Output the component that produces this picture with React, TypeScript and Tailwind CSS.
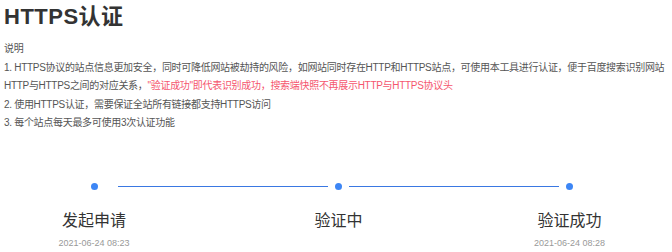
import React from "react";

const font = { fontFamily: '"Liberation Sans", "Noto Sans CJK SC", sans-serif' };

export default function App() {
  return (
    <div className="w-[672px] h-[252px] bg-white overflow-hidden" style={font}>
      <div className="pl-[4px] h-[34px] leading-[34px] text-[22px] font-bold text-[#333333] tracking-[0.5px]">HTTPS认证</div>
      <div className="mt-[6px] pl-[4px] text-[10px] leading-[18.5px] text-[#555555] whitespace-nowrap tracking-[-0.3px]">
        <div>说明</div>
        <div>1. HTTPS协议的站点信息更加安全，同时可降低网站被劫持的风险，如网站同时存在HTTP和HTTPS站点，可使用本工具进行认证，便于百度搜索识别网站</div>
        <div>
          HTTP与HTTPS之间的对应关系，
          <span className="text-[#f5566e]">"验证成功"即代表识别成功，搜索端快照不再展示HTTP与HTTPS协议头</span>
        </div>
        <div>2. 使用HTTPS认证，需要保证全站所有链接都支持HTTPS访问</div>
        <div>3. 每个站点每天最多可使用3次认证功能</div>
      </div>
      <div className="mt-[50px] flex items-center h-[7px]">
        <div className="ml-[91px] w-[7px] h-[7px] rounded-full bg-[#3d86f5]" />
        <div className="ml-[20px] w-[210px] h-px bg-[#3a78e2]" />
        <div className="ml-[7px] w-[7px] h-[7px] rounded-full bg-[#3d86f5]" />
        <div className="ml-[7px] w-[210px] h-px bg-[#3a78e2]" />
        <div className="ml-[7px] w-[7px] h-[7px] rounded-full bg-[#3d86f5]" />
      </div>
      <div className="mt-[21px] flex">
        <div className="ml-[34px] w-[120px] text-center">
          <div className="text-[16px] leading-[20px] text-[#333333]">发起申请</div>
          <div className="mt-[6px] text-[9px] leading-[12px] text-[#999999]">2021-06-24 08:23</div>
        </div>
        <div className="w-[369px] text-center">
          <div className="text-[16px] leading-[20px] text-[#333333]">验证中</div>
        </div>
        <div className="w-[93px] text-center">
          <div className="text-[16px] leading-[20px] text-[#333333]">验证成功</div>
          <div className="mt-[6px] text-[9px] leading-[12px] text-[#999999]">2021-06-24 08:28</div>
        </div>
      </div>
    </div>
  );
}
